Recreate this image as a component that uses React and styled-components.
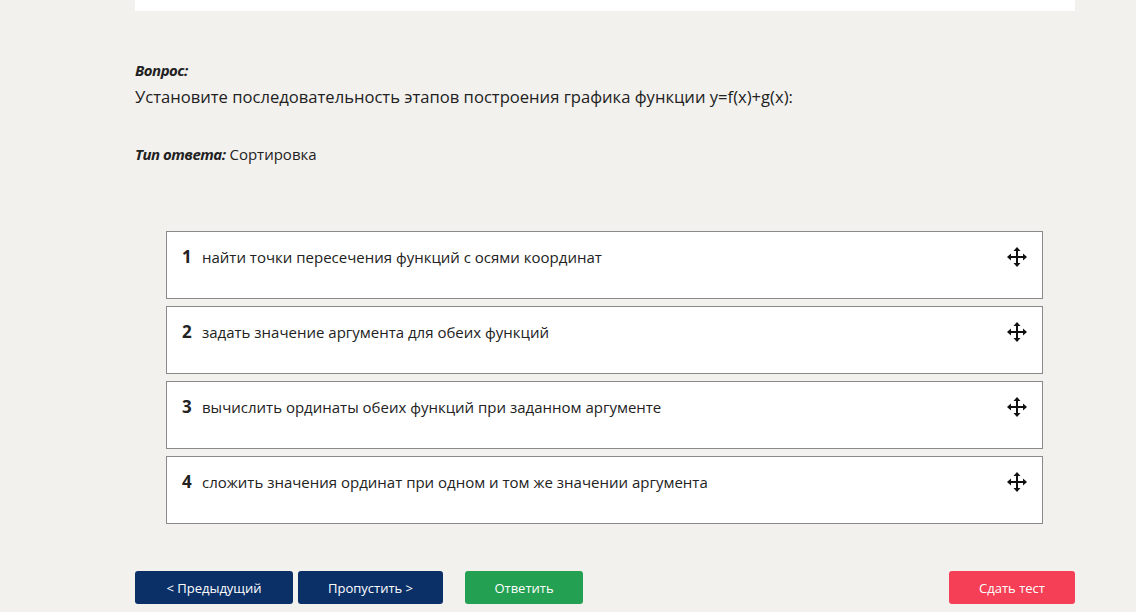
import styled, { createGlobalStyle } from "styled-components"

const GlobalStyle = createGlobalStyle`
  html, body {
    margin: 0;
    padding: 0;
    background: #f2f1ee;
    font-family: "Open Sans", "Liberation Sans", sans-serif;
    color: #222;
  }
`

const items = [
    "найти точки пересечения функций с осями координат",
    "задать значение аргумента для обеих функций",
    "вычислить ординаты обеих функций при заданном аргументе",
    "сложить значения ординат при одном и том же значении аргумента",
]

function MoveIcon() {
    return (
        <svg width="22" height="22" viewBox="0 0 22 22" fill="#111">
            <rect x="10" y="4" width="2" height="14" />
            <rect x="4" y="10" width="14" height="2" />
            <polygon points="11,1 7.5,5 14.5,5" />
            <polygon points="11,21 7.5,17 14.5,17" />
            <polygon points="1,11 5,7.5 5,14.5" />
            <polygon points="21,11 17,7.5 17,14.5" />
        </svg>
    )
}

export default function App() {
    return (
        <>
            <GlobalStyle />
            <Page>
                <TopCard />
                <Label>Вопрос:</Label>
                <Question>Установите последовательность этапов построения графика функции y=f(x)+g(x):</Question>
                <AnswerType>
                    <Label as="span">Тип ответа:</Label> Сортировка
                </AnswerType>
                <SortList>
                    {items.map((text, i) => (
                        <SortItem key={i}>
                            <Num>{i + 1}</Num>
                            <ItemText>{text}</ItemText>
                            <Handle><MoveIcon /></Handle>
                        </SortItem>
                    ))}
                </SortList>
                <Actions>
                    <NavGroup>
                        <Button $color="#0b3068">&lt; Предыдущий</Button>
                        <Button $color="#0b3068" $w={145}>Пропустить &gt;</Button>
                    </NavGroup>
                    <Button $color="#24a052" $w={118}>Ответить</Button>
                    <Spacer />
                    <Button $color="#f43f56" $w={126}>Сдать тест</Button>
                </Actions>
            </Page>
        </>
    )
}

const Page = styled.div`
width: 940px;
margin-left: 135px;
`

const TopCard = styled.div`
height: 11px;
background: #fff;
margin-bottom: 49px;
`

const Label = styled.div`
font-weight: 700;
font-style: italic;
font-size: 15px;
letter-spacing: -0.5px;
line-height: 20px;
color: #222;
`

const Question = styled.div`
font-size: 16.6px;
line-height: 24px;
margin-top: 5px;
`

const AnswerType = styled.div`
margin-top: 35px;
font-size: 15px;
line-height: 20px;
`

const SortList = styled.div`
margin: 67px 32px 0 31px;
display: flex;
flex-direction: column;
gap: 7px;
`

const SortItem = styled.div`
background: #fff;
border: 1px solid #8a8a8a;
display: flex;
align-items: flex-start;
padding: 13px 14px 0 15px;
box-sizing: border-box;
height: 68px;
`

const Num = styled.span`
font-weight: 700;
font-size: 17px;
line-height: 24px;
width: 20px;
`

const ItemText = styled.span`
font-size: 15px;
line-height: 24px;
flex: 1;
`

const Handle = styled.div`
display: flex;
margin-top: 1px;
`

const Actions = styled.div`
display: flex;
align-items: center;
margin-top: 47px;
gap: 22px;
`

const NavGroup = styled.div`
display: flex;
gap: 5px;
`

const Spacer = styled.div`
flex: 1;
`

const Button = styled.button`
width: ${(p) => p.$w || 158}px;
height: 33px;
border: none;
border-radius: 3px;
background: ${(p) => p.$color};
color: #fff;
font-family: "Open Sans", "Liberation Sans", sans-serif;
font-size: 13px;
cursor: pointer;
`
